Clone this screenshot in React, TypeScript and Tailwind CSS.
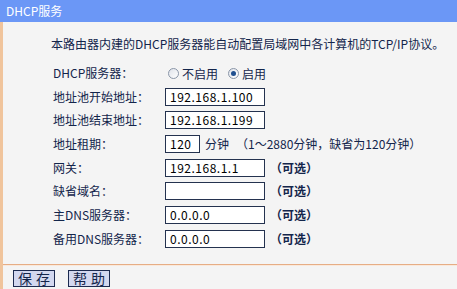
import React from 'react'

const font = { fontFamily: '"SimSun", "Noto Sans CJK SC", sans-serif' }

type Row = {
  label: string
  value?: string
  width?: string
  suffix?: string
}

const rows: Row[] = [
  { label: '地址池开始地址：', value: '192.168.1.100' },
  { label: '地址池结束地址：', value: '192.168.1.199' },
  { label: '地址租期：', value: '120', width: 'w-[35px]', suffix: 'lease' },
  { label: '网关：', value: '192.168.1.1', suffix: '（可选）' },
  { label: '缺省域名：', value: '', suffix: '（可选）' },
  { label: '主DNS服务器：', value: '0.0.0.0', suffix: '（可选）' },
  { label: '备用DNS服务器：', value: '0.0.0.0', suffix: '（可选）' },
]

function Radio({ checked }: { checked?: boolean }) {
  return (
    <span className="inline-flex items-center justify-center w-[11px] h-[11px] rounded-full border border-[#8a96a8] bg-gradient-to-br from-[#dfe3ea] to-[#ffffff]">
      {checked && <span className="w-[5px] h-[5px] rounded-full bg-[#1f4f8f]" />}
    </span>
  )
}

function Field({ value, width = 'w-[100px]' }: { value: string; width?: string }) {
  return (
    <div className={`${width} h-[18px] shrink-0 bg-white border border-[#24324f] flex items-center pl-[4px] text-[12px] text-black tracking-[0.5px]`}>
      {value}
    </div>
  )
}

export default function App() {
  return (
    <div className="w-[457px] h-[289px] bg-[#f4f4f4] text-[#13254b] text-[12px] leading-none overflow-hidden" style={font}>
      {/* Title bar */}
      <div className="h-[22px] bg-[#6b97f6] flex items-center pl-[6px] text-white text-[12px]">
        DHCP服务
      </div>

      <div className="border-l-[3px] border-[#f0c49c] h-[267px] flex flex-col">
        {/* Description */}
        <div className="h-[39px] flex items-center pl-[48px] pt-[4px] whitespace-nowrap">
          本路由器内建的DHCP服务器能自动配置局域网中各计算机的TCP/IP协议。
        </div>

        {/* Form rows */}
        <div className="flex flex-col whitespace-nowrap">
          <div className="h-[23.7px] flex items-center">
            <span className="w-[162px] pl-[50px] shrink-0">DHCP服务器：</span>
            <span className="flex items-center gap-[3px] ml-[3px] mt-[2px]">
              <Radio />
              <span>不启用</span>
            </span>
            <span className="flex items-center gap-[3px] ml-[10px] mt-[2px]">
              <Radio checked />
              <span>启用</span>
            </span>
          </div>
          {rows.map((r) => (
            <div key={r.label} className="h-[23.7px] flex items-center">
              <span className="w-[162px] pl-[50px] shrink-0">{r.label}</span>
              <Field value={r.value ?? ''} width={r.width} />
              {r.suffix === 'lease' ? (
                <>
                  <span className="ml-[5px]">分钟</span>
                  <span className="ml-[7px]">（1～2880分钟，缺省为120分钟）</span>
                </>
              ) : (
                r.suffix && <span className="ml-[5px] font-bold">{r.suffix}</span>
              )}
            </div>
          ))}
        </div>

        {/* Divider */}
        <div className="mt-[13px] h-[1px] bg-[#e6ad85]" />
        <div className="h-[1px] bg-[#f9e9dc]" />

        {/* Buttons */}
        <div className="flex gap-[13px] pl-[10px] pt-[4px]">
          <button className="w-[42px] h-[17px] bg-[#d3d8ef] border border-[#1c2a4f] text-[14px] text-[#13254b] flex items-center justify-center tracking-[4px] pl-[4px]">
            保存
          </button>
          <button className="w-[42px] h-[17px] bg-[#d3d8ef] border border-[#1c2a4f] text-[14px] text-[#13254b] flex items-center justify-center tracking-[4px] pl-[4px]">
            帮助
          </button>
        </div>
      </div>
    </div>
  )
}
